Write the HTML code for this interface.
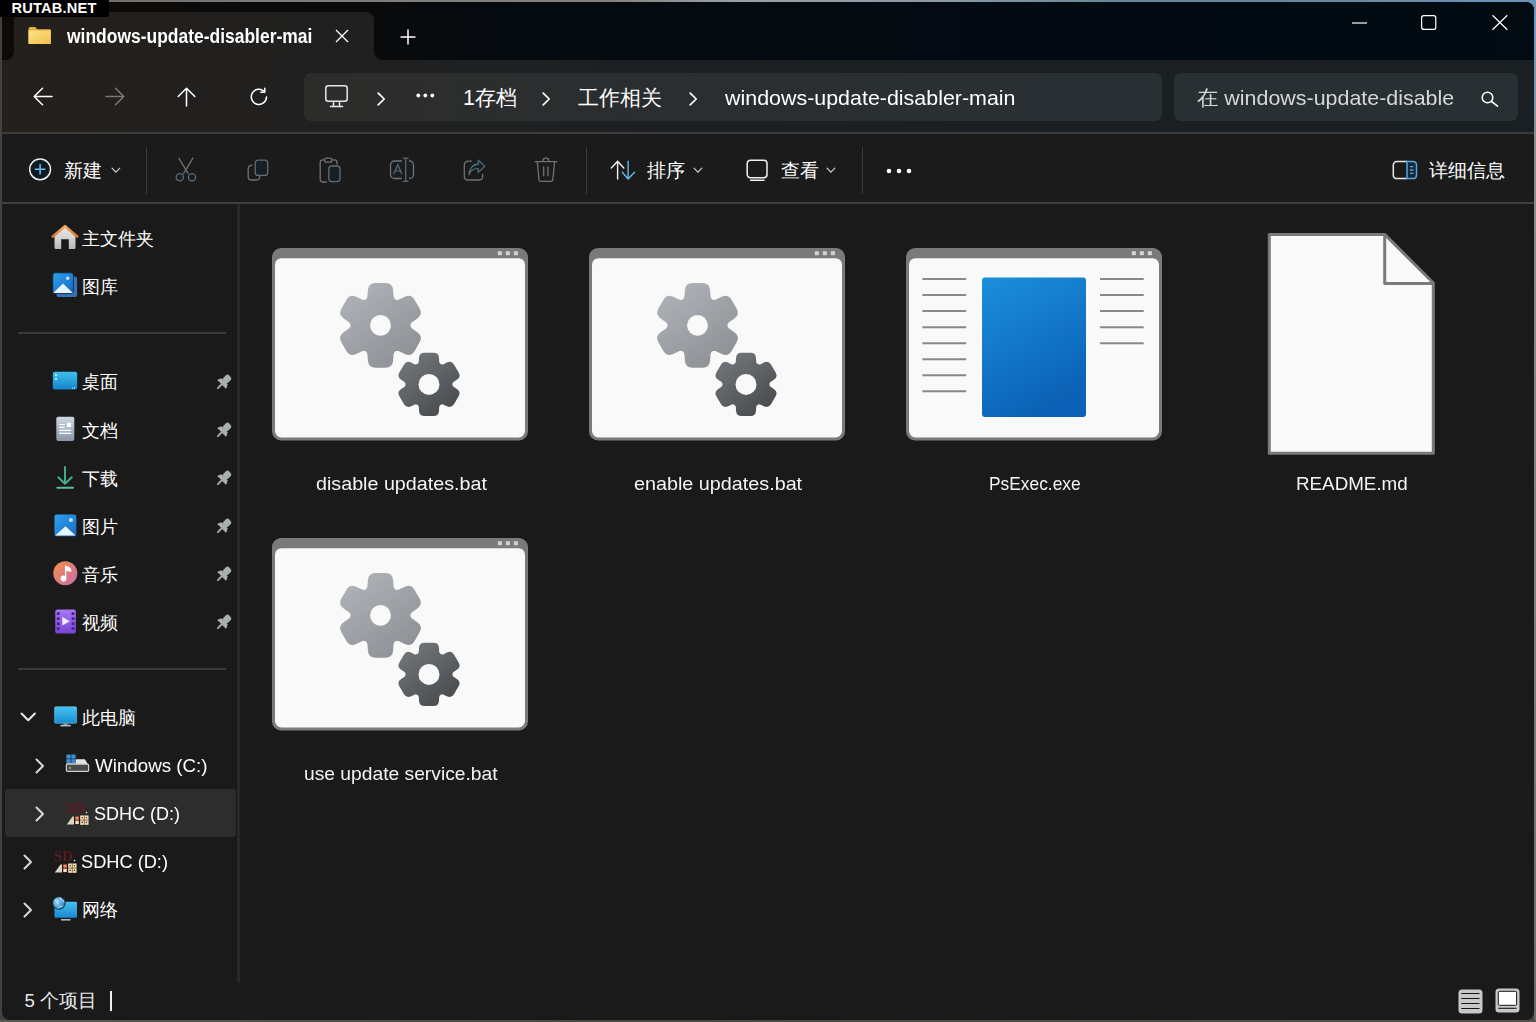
<!DOCTYPE html>
<html><head><meta charset="utf-8">
<style>
*{box-sizing:border-box;margin:0;padding:0}
html,body{width:1536px;height:1022px;overflow:hidden}
body{position:relative;background:#44413d;font-family:"Liberation Sans",sans-serif;color:#fff}
.abs{position:absolute}
#win{position:absolute;left:2px;top:2px;width:1532px;height:1018px;border-radius:8px;overflow:hidden;background:#1a1a1a}
#title{position:absolute;left:0;top:0;width:1532px;height:58px;background:linear-gradient(90deg,#0d0b09 0%,#0a0a0a 22%,#050a0f 32%,#030a11 60%,#020b12 100%)}
#addr{position:absolute;left:0;top:58px;width:1532px;height:72px;background:linear-gradient(90deg,#24201c 0%,#22201e 12%,#202020 24%,#1e2022 34%,#1c2023 50%,#1a1f23 100%)}
.tab{position:absolute;left:12px;top:10px;width:360px;height:50px;border-radius:8px 8px 0 0;background:linear-gradient(90deg,#24201c 0%,#22201e 50%,#202020 100%)}
.inv{position:absolute;width:8px;height:8px;top:50px}
#hl1{position:absolute;left:0;top:130px;width:1532px;height:2px;background:#3b3b3b}
#cmd{position:absolute;left:0;top:132px;width:1532px;height:68px;background:#1b1b1b}
#hl2{position:absolute;left:0;top:200px;width:1532px;height:2px;background:#404040}
#split{position:absolute;left:235.3px;top:202px;width:2.8px;height:778px;background:#282828}
.t{position:absolute;white-space:nowrap;transform-origin:0 0;line-height:1}
.box{position:absolute;border-radius:7px}
.sep{position:absolute;width:1px;background:#3a3a3a}
svg{position:absolute;overflow:visible}
</style></head><body>
<div class="abs" style="left:0;top:0;width:1536px;height:2px;background:linear-gradient(90deg,#6a6866 0%,#7e7c7a 20%,#85837f 40%,#9aa2a8 48%,#8a98a2 62%,#6a8898 72%,#688aa0 88%,#6b93bd 100%)"></div>
<div class="abs" style="left:1534px;top:0;width:2px;height:1022px;background:linear-gradient(180deg,#6b9ac8 0%,#7a94aa 8%,#8a8c8c 15%,#7e7e7c 60%,#6a6a66 100%)"></div>
<div class="abs" style="left:0;top:1020px;width:1536px;height:2px;background:linear-gradient(90deg,#5a5a50 0%,#4a4844 40%,#55524e 100%)"></div>
<div class="abs" style="left:1522px;top:0;width:14px;height:14px;background:#6a92ba"></div>
<div id="win">
  <div id="title"></div>
  <div id="addr"></div>
  <div class="tab"></div>
  <div class="inv" style="left:4px;background:radial-gradient(circle 8px at 0 0,#0c0a08 7.4px,#23201c 8px)"></div>
  <div class="inv" style="left:372px;background:radial-gradient(circle 8px at 100% 0,#090a0a 7.4px,#202020 8px)"></div>
  <div id="hl1"></div>
  <div id="cmd"></div>
  <div id="hl2"></div>
  <div id="split"></div>
</div>

<!-- TITLE BAR -->
<svg style="left:28px;top:26px" width="24" height="19" viewBox="0 0 24 19">
  <defs><linearGradient id="fg" x1="0" y1="0" x2="1" y2="1"><stop offset="0" stop-color="#fde18a"/><stop offset="1" stop-color="#f1c24a"/></linearGradient></defs>
  <path d="M2.5 1H6.5C8 1 8.6 2.2 8.8 3.2H21.8c.6 0 1 .4 1 1v12.8c0 .6-.4 1-1 1H1.5c-.6 0-1-.4-1-1V3C.5 1.8 1.3 1 2.5 1z" fill="#e2b340"/>
  <path d="M.5 4.6h22.3v12.4c0 .6-.4 1-1 1H1.5c-.6 0-1-.4-1-1z" fill="url(#fg)"/>
</svg>
<div class="t" id="tabtitle" style="left:66.5px;top:27.3px;font-size:19.5px;font-weight:700;transform:scaleX(0.895)">windows-update-disabler-mai</div>
<svg style="left:335px;top:29px" width="14" height="14" viewBox="0 0 14 14"><path d="M1 1L13 13M13 1L1 13" stroke="#fff" stroke-width="1.3"/></svg>
<svg style="left:400px;top:28.5px" width="16" height="16" viewBox="0 0 16 16"><path d="M8 0.5V15.5M0.5 8H15.5" stroke="#fff" stroke-width="1.5"/></svg>
<svg style="left:1352px;top:22px" width="15" height="2" viewBox="0 0 15 2"><path d="M0 1H15" stroke="#fff" stroke-width="1.2"/></svg>
<svg style="left:1421px;top:15px" width="16" height="15" viewBox="0 0 16 15"><rect x="0.6" y="0.6" width="14.2" height="13.8" rx="2.2" fill="none" stroke="#fff" stroke-width="1.2"/></svg>
<svg style="left:1491.5px;top:15px" width="16" height="15" viewBox="0 0 16 15"><path d="M0.5 0.3L15.3 14.7M15.3 0.3L0.5 14.7" stroke="#fff" stroke-width="1.2"/></svg>

<!-- ADDRESS ROW -->
<svg style="left:33px;top:87px" width="20" height="19" viewBox="0 0 20 19"><path d="M1.2 9.5H19M9.5 1.2L1.2 9.5L9.5 17.8" fill="none" stroke="#fff" stroke-width="1.5" stroke-linecap="round" stroke-linejoin="round"/></svg>
<svg style="left:105px;top:87px" width="20" height="19" viewBox="0 0 20 19"><path d="M1 9.5H18.8M10.5 1.2L18.8 9.5L10.5 17.8" fill="none" stroke="#7a7a7a" stroke-width="1.5" stroke-linecap="round" stroke-linejoin="round"/></svg>
<svg style="left:177px;top:87px" width="19" height="20" viewBox="0 0 19 20"><path d="M9.5 19V1.2M1.2 9.5L9.5 1.2L17.8 9.5" fill="none" stroke="#fff" stroke-width="1.5" stroke-linecap="round" stroke-linejoin="round"/></svg>
<svg style="left:249px;top:87px" width="20" height="20" viewBox="0 0 20 20"><path d="M17.5 10A7.6 7.6 0 1 1 15 4.2" fill="none" stroke="#fff" stroke-width="1.5" stroke-linecap="round"/><path d="M15.8 1.2V5.2H11.8" fill="none" stroke="#fff" stroke-width="1.5" stroke-linecap="round" stroke-linejoin="round"/></svg>

<div class="box" style="left:304px;top:72.5px;width:858px;height:48px;background:linear-gradient(90deg,#2d2c2a 0%,#2b2d2e 25%,#2a2e31 50%,#293033 100%)"></div>
<div class="box" style="left:1174px;top:72.5px;width:344px;height:48px;background:#293033"></div>

<svg style="left:325px;top:85px" width="23" height="23" viewBox="0 0 23 23"><rect x="0.8" y="0.8" width="21.4" height="15.4" rx="2.5" fill="none" stroke="#e8e8e8" stroke-width="1.5"/><path d="M8.5 16.5V21.5M14.5 16.5V21.5M5.5 21.5H17.5" stroke="#e8e8e8" stroke-width="1.5" stroke-linecap="round"/></svg>
<svg style="left:377px;top:91.5px" width="9" height="14" viewBox="0 0 9 14"><path d="M1.2 1.2L7.2 7L1.2 12.8" fill="none" stroke="#fff" stroke-width="1.7" stroke-linecap="round" stroke-linejoin="round"/></svg>
<svg style="left:416px;top:93px" width="19" height="5" viewBox="0 0 19 5"><circle cx="2.3" cy="2.5" r="1.9" fill="#fff"/><circle cx="9.3" cy="2.5" r="1.9" fill="#fff"/><circle cx="16.3" cy="2.5" r="1.9" fill="#fff"/></svg>
<div class="t" id="a1" style="left:463px;top:88px;font-size:21.4px">1存档</div>
<svg style="left:542px;top:91.5px" width="9" height="14" viewBox="0 0 9 14"><path d="M1.2 1.2L7.2 7L1.2 12.8" fill="none" stroke="#fff" stroke-width="1.7" stroke-linecap="round" stroke-linejoin="round"/></svg>
<div class="t" id="a2" style="left:577.5px;top:88px;font-size:21.4px">工作相关</div>
<svg style="left:688.5px;top:91.5px" width="9" height="14" viewBox="0 0 9 14"><path d="M1.2 1.2L7.2 7L1.2 12.8" fill="none" stroke="#fff" stroke-width="1.7" stroke-linecap="round" stroke-linejoin="round"/></svg>
<div class="t" id="a3" style="left:724.5px;top:87.4px;font-size:21px;transform:scaleX(1.02)">windows-update-disabler-main</div>
<div class="t" id="s1" style="left:1196.5px;top:87.2px;font-size:21px;color:#d6d8d9;transform:scaleX(1.02)">在 windows-update-disable</div>
<svg style="left:1481px;top:90.5px" width="18" height="16" viewBox="0 0 18 16"><circle cx="6.5" cy="6.5" r="5.3" fill="none" stroke="#fff" stroke-width="1.5"/><path d="M10.5 10.5L16.5 15.2" stroke="#fff" stroke-width="1.6" stroke-linecap="round"/></svg>

<!-- COMMAND BAR -->
<svg style="left:28px;top:157px" width="25" height="25" viewBox="0 0 25 25"><circle cx="12.1" cy="12.3" r="10.4" fill="#0e1a22" stroke="#ececec" stroke-width="1.5"/><path d="M12.1 7V17.6M6.8 12.3H17.4" stroke="#6cc0ea" stroke-width="1.5"/></svg>
<div class="t" id="c1" style="left:64px;top:162px;font-size:18.5px">新建</div>
<svg style="left:110.5px;top:167px" width="10" height="7" viewBox="0 0 10 7"><path d="M1 1.2L4.9 5.2L8.8 1.2" fill="none" stroke="#cfcfcf" stroke-width="1.2" stroke-linecap="round"/></svg>
<div class="sep" style="left:145.5px;top:147px;height:47px"></div>
<svg style="left:175px;top:157px" width="23" height="26" viewBox="0 0 23 26"><path d="M3.8 1.2L13.2 16.5M17.9 1.2L8.6 16.5" stroke="#737373" stroke-width="1.3" stroke-linecap="round"/><circle cx="4.8" cy="20.2" r="3.6" fill="#171f24" stroke="#5b6c76" stroke-width="1.3"/><circle cx="17" cy="20.2" r="3.6" fill="#171f24" stroke="#5b6c76" stroke-width="1.3"/></svg>
<svg style="left:247px;top:159px" width="23" height="23" viewBox="0 0 23 23"><rect x="8.2" y="1.2" width="12.5" height="15.2" rx="3" fill="#171f24" stroke="#5e6d76" stroke-width="1.3"/><path d="M5 6.2C2.8 6.4 1.2 7.8 1.2 10V17.8C1.2 19.8 2.5 21 4.5 21H9.5C11.3 21 12.6 19.8 12.9 17" fill="none" stroke="#737373" stroke-width="1.3" stroke-linecap="round"/></svg>
<svg style="left:319px;top:157px" width="23" height="26" viewBox="0 0 23 26"><path d="M7.5 25H3.8C2.3 25 1.2 23.9 1.2 22.4V5.3C1.2 3.9 2.3 2.8 3.8 2.8H15.8C17.2 2.8 18 3.8 18 5.2V7.2" fill="none" stroke="#737373" stroke-width="1.3" stroke-linecap="round"/><rect x="5.5" y="1.2" width="7.4" height="3.9" rx="1.9" fill="#1b1b1b" stroke="#737373" stroke-width="1.3"/><rect x="9.8" y="9" width="11.2" height="15.6" rx="3" fill="#171f24" stroke="#5e6d76" stroke-width="1.3"/></svg>
<svg style="left:389px;top:157px" width="26" height="26" viewBox="0 0 26 26"><path d="M13 4H5.5C3.3 4 1.5 5.8 1.5 8V17.5C1.5 19.7 3.3 21.5 5.5 21.5H13M20 4H20.5C22.7 4 24.5 5.8 24.5 8V17.5C24.5 19.7 22.7 21.5 20.5 21.5H20" fill="#171f24" stroke="#737373" stroke-width="1.3"/><path d="M16.7 1.2V24.3M13.8 1.2H19.6M13.8 24.3H19.6" stroke="#5b6c76" stroke-width="1.3"/><path d="M4.6 17.2L8.8 7.8L13 17.2M6.2 14H11.4" fill="none" stroke="#5b6c76" stroke-width="1.2"/></svg>
<svg style="left:463px;top:158px" width="24" height="24" viewBox="0 0 24 24"><path d="M8.5 3.2H5.2C3 3.2 1.3 4.9 1.3 7.1V18.2C1.3 20.4 3 22 5.2 22H15.7C17.9 22 19.6 20.4 19.6 18.2V16.5" fill="none" stroke="#737373" stroke-width="1.3" stroke-linecap="round"/><path d="M6 16.8C7.2 12.4 11 10.4 15.3 10.6V14.4L21.8 8.3L15.3 2.3V6C9.5 6.5 6 11 6 16.8Z" fill="#171f24" stroke="#4f6e74" stroke-width="1.3" stroke-linejoin="round"/></svg>
<svg style="left:534px;top:157px" width="24" height="26" viewBox="0 0 24 26"><path d="M1.2 4.7H22.8M8.7 4.5C8.7 2.8 9.8 1.2 11.8 1.2C13.8 1.2 14.9 2.8 14.9 4.5M3.3 4.8L4.9 22.2C5 23.5 5.9 24.3 7.2 24.3H16.6C17.9 24.3 18.8 23.5 18.9 22.2L20.6 4.8M9.7 9.8V18.8M14 9.8V18.8" fill="none" stroke="#737373" stroke-width="1.3" stroke-linecap="round"/></svg>
<div class="sep" style="left:585.5px;top:147px;height:47px"></div>
<svg style="left:610px;top:160px" width="26" height="20" viewBox="0 0 26 20"><path d="M7.6 19V1.3M1.3 8L7.6 1.3L13.8 8" fill="none" stroke="#f2f2f2" stroke-width="1.4" stroke-linecap="round" stroke-linejoin="round"/><path d="M18.1 1.3V19M12.3 12.2L18.1 19L24.5 12.2" fill="none" stroke="#67b9ea" stroke-width="1.4" stroke-linecap="round" stroke-linejoin="round"/></svg>
<div class="t" id="c2" style="left:646.5px;top:162px;font-size:18.5px">排序</div>
<svg style="left:692.5px;top:167px" width="10" height="7" viewBox="0 0 10 7"><path d="M1 1.2L4.9 5.2L8.8 1.2" fill="none" stroke="#cfcfcf" stroke-width="1.2" stroke-linecap="round"/></svg>
<svg style="left:746px;top:158.5px" width="23" height="23" viewBox="0 0 23 23"><rect x="1.2" y="1.2" width="19.8" height="17.6" rx="3.2" fill="none" stroke="#f0f0f0" stroke-width="1.5"/><path d="M4.5 21.3H18" stroke="#f0f0f0" stroke-width="1.5" stroke-linecap="round"/></svg>
<div class="t" id="c3" style="left:780.5px;top:162px;font-size:18.5px">查看</div>
<svg style="left:826px;top:167px" width="10" height="7" viewBox="0 0 10 7"><path d="M1 1.2L4.9 5.2L8.8 1.2" fill="none" stroke="#cfcfcf" stroke-width="1.2" stroke-linecap="round"/></svg>
<div class="sep" style="left:861.5px;top:147px;height:47px"></div>
<svg style="left:886px;top:168px" width="26" height="6" viewBox="0 0 26 6"><circle cx="3" cy="3" r="2.3" fill="#fff"/><circle cx="13" cy="3" r="2.3" fill="#fff"/><circle cx="23" cy="3" r="2.3" fill="#fff"/></svg>
<svg style="left:1392px;top:160px" width="27" height="20" viewBox="0 0 27 20"><path d="M15 1.4H5C2.9 1.4 1.3 3 1.3 5.1V14.9C1.3 17 2.9 18.6 5 18.6H15" fill="none" stroke="#e8e8e8" stroke-width="1.5"/><path d="M15 1.4H20.8C22.9 1.4 24.5 3 24.5 5.1V14.9C24.5 17 22.9 18.6 20.8 18.6H15Z" fill="#14283a" stroke="#5aa6dc" stroke-width="1.5"/><path d="M18 6.6H21.4M18 10H21.4M18 13.4H21.4" stroke="#5aa6dc" stroke-width="1.4"/></svg>
<div class="t" id="c4" style="left:1429px;top:162px;font-size:18.5px">详细信息</div>

<!-- SIDEBAR -->
<svg style="left:52px;top:225px" width="26" height="25" viewBox="0 0 26 25">
 <defs><linearGradient id="hb" x1="0" y1="0" x2="0" y2="1"><stop offset="0" stop-color="#ececec"/><stop offset="1" stop-color="#b9b9b9"/></linearGradient>
 <linearGradient id="hr" x1="0" y1="0" x2="0" y2="1"><stop offset="0" stop-color="#f4b060"/><stop offset="1" stop-color="#d9772e"/></linearGradient></defs>
 <path d="M2.5 10.5L13 2.2L23.5 10.5V22.8C23.5 23.5 23 24 22.3 24H16.8V14.2H9.2V24H3.7C3 24 2.5 23.5 2.5 22.8Z" fill="url(#hb)"/>
 <path d="M0.8 11.6L13 1.2L25.2 11.6" fill="none" stroke="url(#hr)" stroke-width="2.6" stroke-linecap="round" stroke-linejoin="round"/>
</svg>
<div class="t" style="left:82px;top:229.6px;font-size:18px;">主文件夹</div>
<svg style="left:52px;top:272px" width="26" height="26" viewBox="0 0 26 26">
 <defs><linearGradient id="gal" x1="0" y1="0" x2="1" y2="1"><stop offset="0" stop-color="#2f9fec"/><stop offset="1" stop-color="#1768c4"/></linearGradient></defs>
 <rect x="4.5" y="4.5" width="20.6" height="20.6" rx="2.2" fill="#3a70b8"/>
 <rect x="0.8" y="0.8" width="20.6" height="20.6" rx="2.2" fill="url(#gal)" stroke="#10223a" stroke-width="0.8"/>
 <path d="M1.2 21L11 11.5L20.8 21Z" fill="#e6f4fc"/>
 <circle cx="15.7" cy="6.3" r="1.7" fill="#bfe6fb"/>
</svg>
<div class="t" style="left:82px;top:277.6px;font-size:18px;">图库</div>
<div class="abs" style="left:17.5px;top:332px;width:208px;height:2px;background:#3a3a3a"></div>
<svg style="left:52px;top:371px" width="26" height="20" viewBox="0 0 26 20">
 <defs><linearGradient id="dsk" x1="0" y1="0" x2="0" y2="1"><stop offset="0" stop-color="#3cc0ec"/><stop offset="1" stop-color="#1784cc"/></linearGradient></defs>
 <rect x="0.8" y="0.8" width="24.4" height="17.6" rx="2" fill="url(#dsk)"/>
 <rect x="3" y="3.2" width="2" height="2" fill="#bfefff"/><rect x="3" y="7" width="2" height="2" fill="#bfefff"/>
 <rect x="20" y="16.6" width="1" height="1" fill="#dff"/><rect x="22" y="16.6" width="1" height="1" fill="#dff"/>
</svg>
<div class="t" style="left:82px;top:373.1px;font-size:18px;">桌面</div><svg style="left:215px;top:372.5px" width="18" height="18" viewBox="0 0 18 18"><g transform="rotate(45 9 9)" fill="#a9aeb0"><rect x="5.6" y="0.8" width="6.8" height="7.8" rx="2.2"/><path d="M4.8 8H13.2L15.2 11.6C15.4 12 15.1 12.4 14.7 12.4H3.3C2.9 12.4 2.6 12 2.8 11.6Z"/><path d="M9 12V17.6" stroke="#a9aeb0" stroke-width="1.9" stroke-linecap="round"/></g></svg>
<svg style="left:56px;top:416px" width="19" height="26" viewBox="0 0 19 26">
 <defs><linearGradient id="doc" x1="0" y1="0" x2="0" y2="1"><stop offset="0" stop-color="#cfd8e2"/><stop offset="1" stop-color="#8796aa"/></linearGradient></defs>
 <rect x="0.3" y="0.7" width="18" height="24.2" rx="2" fill="url(#doc)"/>
 <path d="M3.2 8.5H8.8M3.2 11.4H8.8M3.2 14.4H15.2M3.2 17.4H15.2" stroke="#fff" stroke-width="1.2"/>
 <rect x="10.8" y="6.8" width="4.3" height="4.3" fill="#fff"/>
</svg>
<div class="t" style="left:82px;top:421.6px;font-size:18px;">文档</div><svg style="left:215px;top:421px" width="18" height="18" viewBox="0 0 18 18"><g transform="rotate(45 9 9)" fill="#a9aeb0"><rect x="5.6" y="0.8" width="6.8" height="7.8" rx="2.2"/><path d="M4.8 8H13.2L15.2 11.6C15.4 12 15.1 12.4 14.7 12.4H3.3C2.9 12.4 2.6 12 2.8 11.6Z"/><path d="M9 12V17.6" stroke="#a9aeb0" stroke-width="1.9" stroke-linecap="round"/></g></svg>
<svg style="left:56px;top:466px" width="19" height="24" viewBox="0 0 19 24">
 <path d="M9 1V17.8M2.3 11.3L9 17.8L15.8 11.3" fill="none" stroke="#46b090" stroke-width="1.9" stroke-linecap="round" stroke-linejoin="round"/>
 <path d="M1.3 21.8H17" stroke="#5fbb9c" stroke-width="1.9" stroke-linecap="round"/>
</svg>
<div class="t" style="left:82px;top:469.6px;font-size:18px;">下载</div><svg style="left:215px;top:469px" width="18" height="18" viewBox="0 0 18 18"><g transform="rotate(45 9 9)" fill="#a9aeb0"><rect x="5.6" y="0.8" width="6.8" height="7.8" rx="2.2"/><path d="M4.8 8H13.2L15.2 11.6C15.4 12 15.1 12.4 14.7 12.4H3.3C2.9 12.4 2.6 12 2.8 11.6Z"/><path d="M9 12V17.6" stroke="#a9aeb0" stroke-width="1.9" stroke-linecap="round"/></g></svg>
<svg style="left:53.5px;top:513.5px" width="23" height="23" viewBox="0 0 23 23">
 <defs><linearGradient id="pic" x1="0" y1="0" x2="1" y2="1"><stop offset="0" stop-color="#2fa2ee"/><stop offset="1" stop-color="#186ac6"/></linearGradient></defs>
 <rect x="0.5" y="0.5" width="21.8" height="21.8" rx="2.2" fill="url(#pic)"/>
 <path d="M1.2 21.6L11.5 12.2L21.6 21.6Z" fill="#e6f4fc"/>
 <circle cx="16.9" cy="6" r="2" fill="#bfe6fb"/>
</svg>
<div class="t" style="left:82px;top:517.6px;font-size:18px;">图片</div><svg style="left:215px;top:517px" width="18" height="18" viewBox="0 0 18 18"><g transform="rotate(45 9 9)" fill="#a9aeb0"><rect x="5.6" y="0.8" width="6.8" height="7.8" rx="2.2"/><path d="M4.8 8H13.2L15.2 11.6C15.4 12 15.1 12.4 14.7 12.4H3.3C2.9 12.4 2.6 12 2.8 11.6Z"/><path d="M9 12V17.6" stroke="#a9aeb0" stroke-width="1.9" stroke-linecap="round"/></g></svg>
<svg style="left:52.5px;top:560.5px" width="25" height="25" viewBox="0 0 25 25">
 <defs><linearGradient id="mus" x1="0" y1="0" x2="1" y2="1"><stop offset="0" stop-color="#f59048"/><stop offset="1" stop-color="#c86aae"/></linearGradient></defs>
 <circle cx="12.3" cy="12.3" r="12" fill="url(#mus)"/>
 <circle cx="10.5" cy="17.5" r="2.9" fill="#fff"/>
 <path d="M12.6 17.5V5.5C14.6 5.8 17.6 7 17.8 10.2L12.6 9.2" fill="#fff" stroke="#fff" stroke-width="1.3" stroke-linejoin="round"/>
</svg>
<div class="t" style="left:82px;top:565.6px;font-size:18px;">音乐</div><svg style="left:215px;top:565px" width="18" height="18" viewBox="0 0 18 18"><g transform="rotate(45 9 9)" fill="#a9aeb0"><rect x="5.6" y="0.8" width="6.8" height="7.8" rx="2.2"/><path d="M4.8 8H13.2L15.2 11.6C15.4 12 15.1 12.4 14.7 12.4H3.3C2.9 12.4 2.6 12 2.8 11.6Z"/><path d="M9 12V17.6" stroke="#a9aeb0" stroke-width="1.9" stroke-linecap="round"/></g></svg>
<svg style="left:54.5px;top:608.5px" width="22" height="25" viewBox="0 0 22 25">
 <defs><linearGradient id="vid" x1="0" y1="0" x2="0" y2="1"><stop offset="0" stop-color="#a678f2"/><stop offset="1" stop-color="#7a44d4"/></linearGradient></defs>
 <rect x="0.3" y="0.5" width="20.5" height="24" rx="2" fill="url(#vid)"/>
 <g fill="#4a1e98"><rect x="1.8" y="3.2" width="2.8" height="2.8"/><rect x="1.8" y="8.2" width="2.8" height="2.8"/><rect x="1.8" y="13.2" width="2.8" height="2.8"/><rect x="1.8" y="18.2" width="2.8" height="2.8"/>
 <rect x="16.6" y="3.2" width="2.8" height="2.8"/><rect x="16.6" y="8.2" width="2.8" height="2.8"/><rect x="16.6" y="13.2" width="2.8" height="2.8"/><rect x="16.6" y="18.2" width="2.8" height="2.8"/></g>
 <path d="M7.3 8V16.6L14.8 12.3Z" fill="#f4ecff"/>
</svg>
<div class="t" style="left:82px;top:613.6px;font-size:18px;">视频</div><svg style="left:215px;top:613px" width="18" height="18" viewBox="0 0 18 18"><g transform="rotate(45 9 9)" fill="#a9aeb0"><rect x="5.6" y="0.8" width="6.8" height="7.8" rx="2.2"/><path d="M4.8 8H13.2L15.2 11.6C15.4 12 15.1 12.4 14.7 12.4H3.3C2.9 12.4 2.6 12 2.8 11.6Z"/><path d="M9 12V17.6" stroke="#a9aeb0" stroke-width="1.9" stroke-linecap="round"/></g></svg>
<div class="abs" style="left:17.5px;top:667.5px;width:208px;height:2px;background:#3a3a3a"></div>
<svg style="left:19.5px;top:712px" width="17" height="10" viewBox="0 0 17 10"><path d="M1.5 1.5L8.2 8.2L14.9 1.5" fill="none" stroke="#e8e8e8" stroke-width="2" stroke-linecap="round" stroke-linejoin="round"/></svg>
<svg style="left:53.5px;top:706px" width="24" height="21" viewBox="0 0 24 21">
 <defs><linearGradient id="pc" x1="0" y1="0" x2="0" y2="1"><stop offset="0" stop-color="#44c6f2"/><stop offset="1" stop-color="#1a8ad4"/></linearGradient></defs>
 <rect x="0.6" y="0.8" width="22" height="16.4" rx="1.2" fill="url(#pc)" stroke="#6fc4e6" stroke-width="0.6"/>
 <path d="M6.5 19.6H16.7" stroke="#b8c4cc" stroke-width="1.6"/><rect x="9.5" y="17.2" width="4" height="2" fill="#8a9aa6"/>
</svg>
<div class="t" style="left:82px;top:708.6px;font-size:18px;">此电脑</div>
<svg style="left:35px;top:758.0px" width="10" height="16" viewBox="0 0 10 16"><path d="M1.5 1.5L8 8L1.5 14.5" fill="none" stroke="#d8d8d8" stroke-width="2" stroke-linecap="round" stroke-linejoin="round"/></svg>
<svg style="left:65.5px;top:753.5px" width="24" height="19" viewBox="0 0 24 19">
 <g fill="#3b8fd8"><rect x="0.4" y="0.5" width="4.3" height="4.1"/><rect x="5.3" y="0.5" width="4.3" height="4.1"/><rect x="0.4" y="5.2" width="4.3" height="4.1"/><rect x="5.3" y="5.2" width="4.3" height="4.1"/></g>
 <path d="M9.8 5.3H18.8L22 10.2H0.4V9.4H9.8Z" fill="#e4e4e4"/>
 <rect x="0.4" y="10.2" width="22.2" height="7.2" rx="1" fill="#4a4a4a" stroke="#cfcfcf" stroke-width="1.2"/>
 <rect x="3.2" y="13" width="1.8" height="1.8" fill="#7cc870"/>
</svg>
<div class="t" style="left:94.5px;top:756px;font-size:19px;transform:scaleX(0.9875)">Windows (C:)</div>
<div class="abs" style="left:5px;top:789px;width:231px;height:48px;background:#2d2d2d;border-radius:3px"></div>
<svg style="left:35px;top:806.0px" width="10" height="16" viewBox="0 0 10 16"><path d="M1.5 1.5L8 8L1.5 14.5" fill="none" stroke="#d8d8d8" stroke-width="2" stroke-linecap="round" stroke-linejoin="round"/></svg>
<svg style="left:66px;top:801px" width="24" height="25" viewBox="0 0 24 25">
 <text x="0" y="12" font-family="Liberation Serif" font-size="15" font-weight="700" fill="#5c1a22" textLength="19" lengthAdjust="spacingAndGlyphs" style="filter:blur(0.35px)">SD</text><circle cx="20.5" cy="11.5" r="0.8" fill="#f0f0f0"/>
 <path d="M0.8 23.5L6.5 15.5H8V23.5Z" fill="#d8d8c0"/><rect x="8" y="15" width="6" height="8.5" fill="#3a0e08"/><rect x="9.3" y="15.5" width="3.5" height="3.2" fill="#e8906a"/><rect x="9.3" y="19.6" width="3.5" height="3.5" fill="#f8e0d0"/>
 <rect x="14.2" y="14.5" width="8.3" height="9.3" fill="#f4e4c4"/><path d="M18.3 14.5V23.8M14.2 19.1H22.5" stroke="#7a4a20" stroke-width="0.8"/><g fill="#5a3a20"><circle cx="16.2" cy="16.8" r="0.8"/><circle cx="20.4" cy="16.8" r="0.8"/><circle cx="16.2" cy="21.4" r="0.8"/><circle cx="20.4" cy="21.4" r="0.8"/></g>
</svg>
<div class="t" style="left:93.8px;top:804px;font-size:19px;transform:scaleX(0.948)">SDHC (D:)</div><svg style="left:23px;top:854.0px" width="10" height="16" viewBox="0 0 10 16"><path d="M1.5 1.5L8 8L1.5 14.5" fill="none" stroke="#d8d8d8" stroke-width="2" stroke-linecap="round" stroke-linejoin="round"/></svg>
<svg style="left:54px;top:849px" width="24" height="25" viewBox="0 0 24 25">
 <text x="0" y="12" font-family="Liberation Serif" font-size="15" font-weight="700" fill="#5c1a22" textLength="19" lengthAdjust="spacingAndGlyphs" style="filter:blur(0.35px)">SD</text><circle cx="20.5" cy="11.5" r="0.8" fill="#f0f0f0"/>
 <path d="M0.8 23.5L6.5 15.5H8V23.5Z" fill="#d8d8c0"/><rect x="8" y="15" width="6" height="8.5" fill="#3a0e08"/><rect x="9.3" y="15.5" width="3.5" height="3.2" fill="#e8906a"/><rect x="9.3" y="19.6" width="3.5" height="3.5" fill="#f8e0d0"/>
 <rect x="14.2" y="14.5" width="8.3" height="9.3" fill="#f4e4c4"/><path d="M18.3 14.5V23.8M14.2 19.1H22.5" stroke="#7a4a20" stroke-width="0.8"/><g fill="#5a3a20"><circle cx="16.2" cy="16.8" r="0.8"/><circle cx="20.4" cy="16.8" r="0.8"/><circle cx="16.2" cy="21.4" r="0.8"/><circle cx="20.4" cy="21.4" r="0.8"/></g>
</svg>
<div class="t" style="left:81.3px;top:852px;font-size:19px;transform:scaleX(0.958)">SDHC (D:)</div><svg style="left:23px;top:902.0px" width="10" height="16" viewBox="0 0 10 16"><path d="M1.5 1.5L8 8L1.5 14.5" fill="none" stroke="#d8d8d8" stroke-width="2" stroke-linecap="round" stroke-linejoin="round"/></svg>
<svg style="left:52px;top:896px" width="26" height="25" viewBox="0 0 26 25">
 <defs><linearGradient id="net" x1="0" y1="0" x2="0" y2="1"><stop offset="0" stop-color="#44c2ee"/><stop offset="1" stop-color="#1a86d0"/></linearGradient>
 <radialGradient id="glb" cx="0.35" cy="0.35" r="0.7"><stop offset="0" stop-color="#9ad8f8"/><stop offset="1" stop-color="#2a7cc0"/></radialGradient></defs>
 <rect x="2.5" y="5.8" width="22.5" height="16" rx="1" fill="url(#net)"/>
 <path d="M9 23.8H18.5" stroke="#b8c4cc" stroke-width="1.5"/>
 <circle cx="7" cy="7" r="6.3" fill="url(#glb)" stroke="#1b1b1b" stroke-width="0.8"/>
 <path d="M3.5 4.5C5 5 6 6.5 5.5 8.5M8 1.5C9 3.5 10 5 12 5.5M6 12.5C6.5 11 8 10 10 10.5" fill="none" stroke="#d8f0ff" stroke-width="1"/>
</svg>
<div class="t" style="left:82px;top:900.6px;font-size:18px;">网络</div><svg style="left:0;top:0" width="0" height="0"><defs>
<linearGradient id="gb" gradientUnits="userSpaceOnUse" x1="-30" y1="-42" x2="30" y2="42"><stop offset="0" stop-color="#b0b4b9"/><stop offset="1" stop-color="#8b8f93"/></linearGradient>
<linearGradient id="gs" gradientUnits="userSpaceOnUse" x1="-22" y1="-31" x2="22" y2="31"><stop offset="0" stop-color="#73777b"/><stop offset="1" stop-color="#46494c"/></linearGradient>
<linearGradient id="exe" x1="0" y1="0" x2="0.4" y2="1"><stop offset="0" stop-color="#1b8fdc"/><stop offset="1" stop-color="#0b62b6"/></linearGradient>
<path id="gearB" d="M-13.09 -28.89L-12.57 -35.32Q-12.00 -42.30 -5.00 -42.30L5.00 -42.30Q12.00 -42.30 12.57 -35.32L13.09 -28.89Q13.25 -26.92 14.97 -25.92L14.97 -25.92Q16.68 -24.93 18.48 -25.78L24.31 -28.54Q30.63 -31.54 34.13 -25.48L39.13 -16.82Q42.63 -10.76 36.87 -6.78L31.57 -3.11Q29.93 -1.98 29.93 -0.00L29.93 -0.00Q29.93 1.98 31.57 3.11L36.87 6.78Q42.63 10.76 39.13 16.82L34.13 25.48Q30.63 31.54 24.31 28.54L18.48 25.78Q16.68 24.93 14.97 25.92L14.97 25.92Q13.25 26.92 13.09 28.89L12.57 35.32Q12.00 42.30 5.00 42.30L-5.00 42.30Q-12.00 42.30 -12.57 35.32L-13.09 28.89Q-13.25 26.92 -14.97 25.92L-14.97 25.92Q-16.68 24.93 -18.48 25.78L-24.31 28.54Q-30.63 31.54 -34.13 25.48L-39.13 16.82Q-42.63 10.76 -36.87 6.78L-31.57 3.11Q-29.93 1.98 -29.93 0.00L-29.93 0.00Q-29.93 -1.98 -31.57 -3.11L-36.87 -6.78Q-42.63 -10.76 -39.13 -16.82L-34.13 -25.48Q-30.63 -31.54 -24.31 -28.54L-18.48 -25.78Q-16.68 -24.93 -14.97 -25.92L-14.97 -25.92Q-13.25 -26.92 -13.09 -28.89Z"/>
<path id="gearS" d="M-10.17 -22.84L-10.00 -26.37Q-9.75 -31.60 -4.52 -31.60L4.52 -31.60Q9.75 -31.60 10.00 -26.37L10.17 -22.84Q10.25 -21.15 11.72 -20.30L11.72 -20.30Q13.19 -19.45 14.70 -20.23L17.84 -21.85Q22.49 -24.24 25.11 -19.71L29.63 -11.89Q32.24 -7.36 27.84 -4.53L24.87 -2.61Q23.44 -1.70 23.44 -0.00L23.44 -0.00Q23.44 1.70 24.87 2.61L27.84 4.53Q32.24 7.36 29.63 11.89L25.11 19.71Q22.49 24.24 17.84 21.85L14.70 20.23Q13.19 19.45 11.72 20.30L11.72 20.30Q10.25 21.15 10.17 22.84L10.00 26.37Q9.75 31.60 4.52 31.60L-4.52 31.60Q-9.75 31.60 -10.00 26.37L-10.17 22.84Q-10.25 21.15 -11.72 20.30L-11.72 20.30Q-13.19 19.45 -14.70 20.23L-17.84 21.85Q-22.49 24.24 -25.11 19.71L-29.63 11.89Q-32.24 7.36 -27.84 4.53L-24.87 2.61Q-23.44 1.70 -23.44 0.00L-23.44 0.00Q-23.44 -1.70 -24.87 -2.61L-27.84 -4.53Q-32.24 -7.36 -29.63 -11.89L-25.11 -19.71Q-22.49 -24.24 -17.84 -21.85L-14.70 -20.23Q-13.19 -19.45 -11.72 -20.30L-11.72 -20.30Q-10.25 -21.15 -10.17 -22.84Z"/>
<g id="frame">
 <rect x="0" y="0" width="256" height="192.5" rx="9" fill="#7a7a7a"/>
 <rect x="3" y="10.2" width="250" height="179.2" rx="6.5" fill="#f9f9f9"/>
 <rect x="225.8" y="3.2" width="4.1" height="4" fill="#d2d2d2"/><rect x="233.8" y="3.2" width="4.1" height="4" fill="#d2d2d2"/><rect x="241.8" y="3.2" width="4.1" height="4" fill="#d2d2d2"/>
</g>
<g id="batico">
 <use href="#frame"/>
 <g transform="translate(108.5 77.4)"><use href="#gearB" fill="url(#gb)"/><circle r="10.4" fill="#f9f9f9"/></g>
 <g transform="translate(157 136.4)"><use href="#gearS" fill="url(#gs)"/><circle r="10.5" fill="#f9f9f9"/></g>
</g>
</defs></svg>
<!-- CONTENT -->
<svg style="left:272px;top:247.8px" width="256" height="193"><use href="#batico"/></svg>
<div class="t" style="left:315.8px;top:474.2px;font-size:19px;color:#f4f4f4;transform:scaleX(1.037)">disable updates.bat</div>
<svg style="left:589px;top:247.8px" width="256" height="193"><use href="#batico"/></svg>
<div class="t" style="left:633.6px;top:474.2px;font-size:19px;color:#f4f4f4;transform:scaleX(1.04)">enable updates.bat</div>
<svg style="left:906px;top:247.8px" width="256" height="193"><use href="#frame"/>
 <rect x="76" y="29.6" width="104" height="139.4" rx="3" fill="url(#exe)"/><path d="M16.4 31.00H60.2" stroke="#888" stroke-width="2"/><path d="M16.4 47.05H60.2" stroke="#888" stroke-width="2"/><path d="M16.4 63.10H60.2" stroke="#888" stroke-width="2"/><path d="M16.4 79.15H60.2" stroke="#888" stroke-width="2"/><path d="M16.4 95.20H60.2" stroke="#888" stroke-width="2"/><path d="M16.4 111.25H60.2" stroke="#888" stroke-width="2"/><path d="M16.4 127.30H60.2" stroke="#888" stroke-width="2"/><path d="M16.4 143.35H60.2" stroke="#888" stroke-width="2"/><path d="M194 31.00H237.7" stroke="#888" stroke-width="2"/><path d="M194 47.05H237.7" stroke="#888" stroke-width="2"/><path d="M194 63.10H237.7" stroke="#888" stroke-width="2"/><path d="M194 79.15H237.7" stroke="#888" stroke-width="2"/><path d="M194 95.20H237.7" stroke="#888" stroke-width="2"/></svg>
<div class="t" style="left:989.2px;top:474.2px;font-size:19px;color:#f4f4f4;transform:scaleX(0.913)">PsExec.exe</div>
<svg style="left:1266px;top:231px" width="172" height="226" viewBox="0 0 172 226">
 <path d="M3.3 3.4H118.7L167.3 52V222.3H3.3Z" fill="#f9f9f9" stroke="#7a7a7a" stroke-width="3" stroke-linejoin="round"/>
 <path d="M118.7 3.4V52.4H167.3" fill="none" stroke="#7a7a7a" stroke-width="3" stroke-linejoin="round"/>
</svg>
<div class="t" style="left:1296px;top:474.2px;font-size:19px;color:#f4f4f4;transform:scaleX(0.989)">README.md</div>
<svg style="left:272px;top:537.8px" width="256" height="193"><use href="#batico"/></svg>
<div class="t" style="left:304.3px;top:764.2px;font-size:19px;color:#f4f4f4;transform:scaleX(1.0125)">use update service.bat</div>

<!-- STATUS BAR -->
<div class="t" style="left:24.5px;top:992.2px;font-size:18.6px;color:#e8e8e8">5 个项目</div>
<div class="abs" style="left:110px;top:991px;width:2.3px;height:19.5px;background:#f0f0f0"></div>
<svg style="left:1457.5px;top:988.5px" width="25" height="25" viewBox="0 0 25 25"><rect x="0.5" y="0.5" width="24" height="24" rx="3.5" fill="#c8c8c8"/><path d="M3.3 4.5H21.5M3.3 9.5H21.5M3.3 14.5H21.5M3.3 19.5H21.5" stroke="#161616" stroke-width="1.1"/></svg>
<svg style="left:1494.5px;top:987.5px" width="25" height="25" viewBox="0 0 25 25"><rect x="0.5" y="0.5" width="24" height="24" rx="3.5" fill="#c8c8c8"/><rect x="3.3" y="3.3" width="18.3" height="14" rx="1" fill="#fff" stroke="#161616" stroke-width="1"/><path d="M3.3 20.3H21.5" stroke="#161616" stroke-width="1.1"/></svg>

<!-- watermark -->
<div class="abs" style="left:0;top:0;width:109px;height:17px;background:#000;border-radius:0 0 3px 0"></div>
<div class="t" style="left:11.5px;top:0.6px;font-size:14.6px;font-weight:700;color:#fff;letter-spacing:0.2px">RUTAB.NET</div>
</body></html>
